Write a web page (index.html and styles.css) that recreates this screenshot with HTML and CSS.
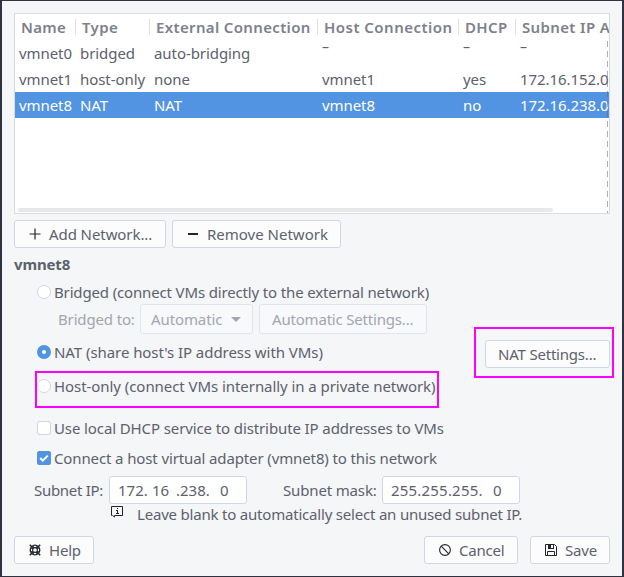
FILE: index.html
```html
<!DOCTYPE html>
<html lang="en">
<head>
<meta charset="utf-8">
<title>Virtual Network Editor</title>
<link rel="stylesheet" href="styles.css">
</head>
<body>
<main class="window">
  <section class="table">
    <div class="row head"><span>Name</span><span>Type</span><span>External Connection</span><span class="t-hostcol">Host Connection</span><span>DHCP</span><span>Subnet IP Address</span></div>
    <div class="row"><span>vmnet0</span><span>bridged</span><span>auto-bridging</span><span class="none">–</span><span class="none">–</span><span class="none">–</span></div>
    <div class="row"><span>vmnet1</span><span>host-only</span><span>none</span><span>vmnet1</span><span>yes</span><span>172.16.152.0</span></div>
    <div class="row selected"><span>vmnet8</span><span>NAT</span><span>NAT</span><span>vmnet8</span><span>no</span><span>172.16.238.0</span></div>
    <div class="scrollbar"></div>
    <div class="overflow-edge"></div>
  </section>

  <div class="toolbar">
    <button class="btn add"><svg width="12" height="12" viewBox="0 0 12 12"><path d="M.5 6h11M6 .5v11" stroke="#20242b" stroke-width="1.2"/></svg><span class="t-add">Add Network...</span></button>
    <button class="btn remove"><svg width="12" height="12" viewBox="0 0 12 12"><path d="M1 6h10" stroke="#20242b" stroke-width="2"/></svg><span class="t-remove">Remove Network</span></button>
  </div>

  <h2>vmnet8</h2>

  <section class="settings">
    <div class="modes">
      <label class="option bridged"><i class="radio"></i><span class="t-bridged">Bridged (connect VMs directly to the external network)</span></label>
      <div class="bridge-row">
        <span class="t-to">Bridged to:</span>
        <button class="btn combo"><span class="t-auto">Automatic</span><svg width="10" height="5" viewBox="0 0 10 5"><path d="M0 0h10L5 5z" fill="#a3a6ae"/></svg></button>
        <button class="btn auto-settings"><span class="t-autoset">Automatic Settings...</span></button>
      </div>
      <label class="option nat"><i class="radio checked"></i><span class="t-nat">NAT (share host's IP address with VMs)</span></label>
      <label class="option host"><i class="radio"></i><span class="t-host">Host-only (connect VMs internally in a private network)</span><b class="mark mark-host"></b></label>
    </div>
    <div class="nat-action"><button class="btn nat-settings"><span class="t-natset">NAT Settings...</span></button><b class="mark mark-nat"></b></div>
  </section>

  <label class="option dhcp"><i class="check"></i><span class="t-dhcp">Use local DHCP service to distribute IP addresses to VMs</span></label>
  <label class="option adapter"><i class="check checked"><svg width="14" height="14" viewBox="0 0 14 14"><path d="M3.2 7l2.6 2.6 5-5" fill="none" stroke="#fff" stroke-width="2"/></svg></i><span class="t-adapter">Connect a host virtual adapter (vmnet8) to this network</span></label>

  <div class="subnet">
    <span class="t-ip">Subnet IP:</span>
    <div class="field ip"><span>172.</span><span>16</span><span>.238.</span><span>0</span></div>
    <span class="t-mask">Subnet mask:</span>
    <div class="field netmask"><span>255.255.255.</span><span>0</span></div>
  </div>
  <div class="hint">
    <svg width="13" height="13" viewBox="0 0 13 13"><path d="M.5.5h11v9H3.5v1.5L1.500 9.500H.5z" fill="none" stroke="#20242b"/><path d="M6 2h1v1H6zM5 4h2v3h1v1H5V7h1V5H5z" fill="#20242b"/></svg>
    <span class="t-hint">Leave blank to automatically select an unused subnet IP.</span>
  </div>

  <footer>
    <button class="btn help"><svg width="12" height="12" viewBox="0 0 12 12"><g fill="none" stroke="#20242b"><circle cx="6" cy="6" r="4.8" stroke-width="1.300"/><circle cx="6" cy="6" r="2.4" stroke-width="1.100"/><path d="M4.500 1v3M7.500 1v3M4.500 8v3M7.500 8v3M1 4.500h3M1 7.500h3M8 4.500h3M8 7.500h3" stroke-width=".8"/><path d="M.8.8l3.200 3.200M11.200.8L8 4M.8 11.200L4 8M11.200 11.200L8 8" stroke-width="1.500"/></g></svg><span class="t-help">Help</span></button>
    <button class="btn cancel"><svg width="12" height="12" viewBox="0 0 12 12"><g fill="none" stroke="#20242b" stroke-width="1.1"><circle cx="6" cy="6" r="5.4"/><path d="M2.2 2.2l7.6 7.6"/></g></svg><span class="t-cancel">Cancel</span></button>
    <button class="btn save"><svg width="12" height="12" viewBox="0 0 12 12"><path d="M.5.5h9l2 2v9H.5zM2.5 11.500V7.500h7v4" fill="none" stroke="#20242b"/><path d="M3 0h6v5H3z" fill="#20242b"/><path d="M6 1h2v3H6z" fill="#fcfcfc"/></svg><span class="t-save">Save</span></button>
  </footer>
</main>
</body>
</html>
```
FILE: styles.css
```css
* { box-sizing: border-box; }
body { margin: 0; background: #f5f6f8; }
.window {
  width: 624px; height: 577px; overflow: hidden;
  border: solid #30323f; border-width: 1px 2px 1px 2px;
  padding: 12px 12px 0 12px;
  background: #f5f6f8; color: #5c616c;
  font: 15px/20px "Noto Sans", sans-serif;
  white-space: nowrap;
}
.table { position: relative; height: 201px; border: 1px solid #d9dce0; background: #fff; overflow: hidden; }
.row { display: grid; grid-template-columns: 61px 74px 168px 141px 57px 160px; height: 26px; line-height: 26px; padding-left: 4px; letter-spacing: -.07px; }
.head { color: #7d818a; font-weight: 600; line-height: 27px; padding-left: 0; letter-spacing: .35px; }
.head span { padding-left: 6px; position: relative; }
.head .t-hostcol { letter-spacing: .47px; }
.head span + span::before { content: ""; position: absolute; left: -1px; top: 5px; width: 1px; height: 16px; background: #dcdfe3; }
.none { line-height: 13px; font-size: 14px; }
.selected { background: #5294e2; color: #fff; }
.scrollbar { position: absolute; left: 3px; bottom: 1px; width: 535px; height: 4px; border-radius: 2px; background: #e8e8e8; }
.overflow-edge { position: absolute; right: 1px; top: 27px; bottom: 0; width: 1px; background: repeating-linear-gradient(#5c616c80 0 6px, transparent 6px 10px); }
.btn { display: flex; align-items: center; height: 28px; padding: 0 0 0 14px; border: 1px solid #cfd6e6; border-radius: 3px; background: #fcfcfd; color: inherit; font: inherit; white-space: nowrap; }
.btn svg { margin-right: 8px; flex: none; }
.toolbar { display: flex; gap: 6px; margin-top: 6px; }
.add { width: 152px; }
.t-add { letter-spacing: -.08px; }
.remove { width: 169px; }
h2 { margin: 6px 0 0; height: 20px; font-size: 15px; line-height: 20px; font-weight: 700; letter-spacing: -.15px; }
.settings { display: grid; grid-template-columns: 1fr 125px; height: 138px; margin-top: 8px; }
.option { position: relative; display: flex; align-items: center; gap: 3px; height: 20px; padding-left: 23px; letter-spacing: -.15px; }
.radio, .check { flex: none; width: 14px; height: 14px; border: 1px solid #cfd6e6; background: #fff; }
.radio { border-radius: 50%; }
.check { border-radius: 2px; display: block; }
.checked { border-color: #5294e2; background: #5294e2; }
.radio.checked { border: 5px solid #5294e2; background: #fff; }
.check svg { display: block; margin: -1px; }
.bridge-row { display: flex; align-items: center; height: 30px; margin-top: 2px; padding-left: 44px; color: #a3a6ae; }
.bridge-row .btn { height: 30px; padding-left: 10px; border-color: #e0e4ee; background: #f8f9fb; }
.t-to { width: 82px; letter-spacing: -.5px; letter-spacing: -.15px; }
.t-auto { letter-spacing: -.1px; }
.combo { width: 113px; }
.combo svg { margin: 0 0 0 9px; }
.auto-settings { width: 168px; margin-left: 6px; }
.bridge-row .auto-settings { padding-left: 12px; }
.t-autoset { letter-spacing: -.19px; }
.nat { margin-top: 8px; letter-spacing: -.06px; }
.host { margin-top: 14px; letter-spacing: -.06px; }
.nat-action { position: relative; padding-top: 58px; }
.nat-settings { width: 125px; padding-left: 12px; }
.t-natset { letter-spacing: -.2px; }
.mark { position: absolute; border: 2px solid #f0f; }
.mark-host { left: 21px; top: -5px; width: 404px; height: 37px; }
.mark-nat { left: -11px; top: 45px; width: 140px; height: 51px; }
.dhcp { margin-top: -2px; letter-spacing: -.11px; }
.adapter { margin-top: 10px; letter-spacing: -.12px; }
.subnet { display: flex; align-items: center; height: 28px; margin-top: 8px; padding-left: 20px; }
.t-ip { width: 75px; letter-spacing: -.3px; }
.t-mask { width: 99px; margin-left: 36px; letter-spacing: -.15px; }
.field { display: flex; align-items: center; width: 138px; height: 28px; padding-left: 8px; border: 1px solid #cfd6e6; border-radius: 3px; background: #fff; }
.ip span:nth-child(1) { width: 34px; }
.ip span:nth-child(2) { width: 24px; }
.ip span:nth-child(3) { width: 44px; }
.netmask span:first-child { width: 102px; letter-spacing: .2px; }
.hint { display: flex; align-items: center; height: 20px; padding-left: 97px; }
.hint svg { margin: -4px 13px 0 0; }
.t-hint { letter-spacing: -.2px; }
footer { display: flex; height: 28px; margin-top: 12px; letter-spacing: -.15px; }
footer .btn { letter-spacing: -.2px; }
.help { width: 80px; }
.cancel { width: 94px; margin-left: auto; }
.save { width: 80px; margin-left: 12px; }
```
